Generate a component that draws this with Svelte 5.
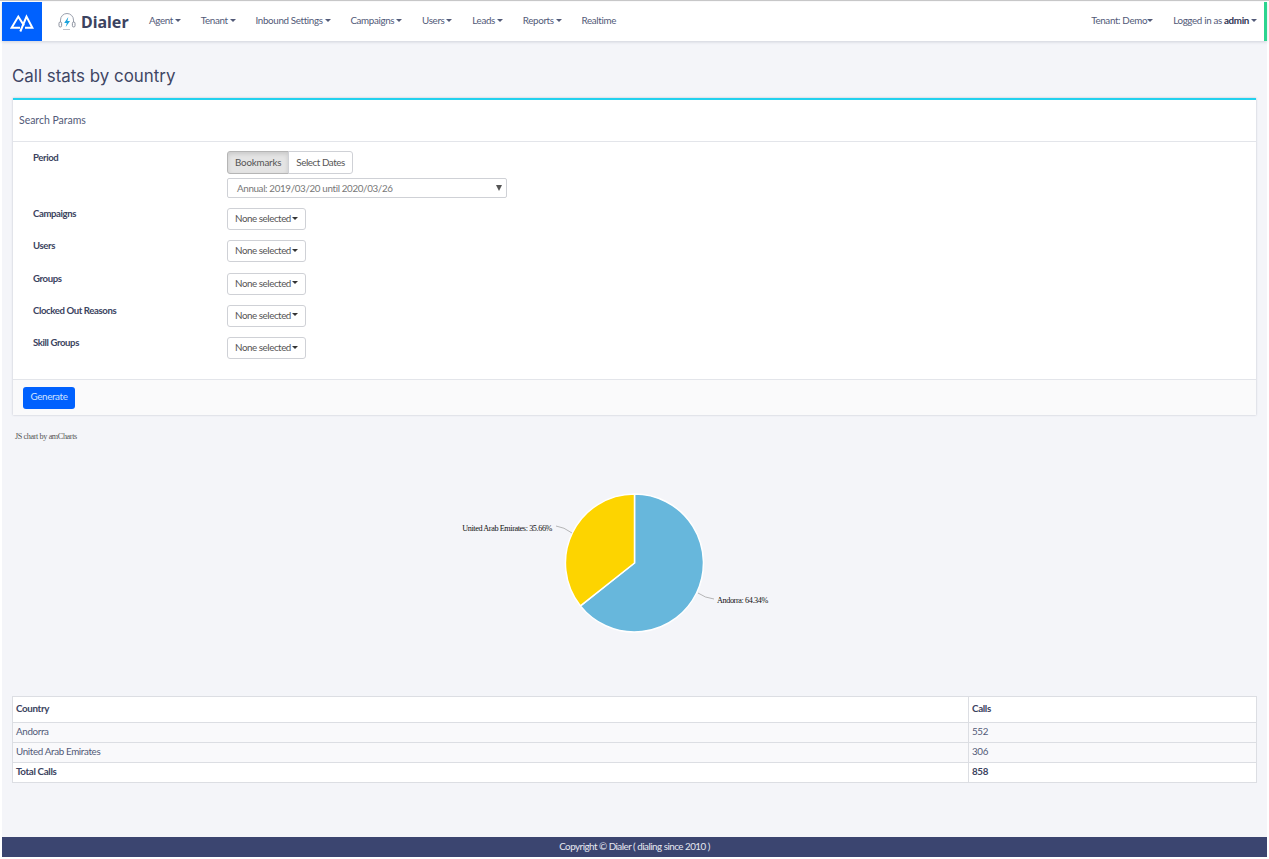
<script>
  const navItems = ['Agent', 'Tenant', 'Inbound Settings', 'Campaigns', 'Users', 'Leads', 'Reports'];
  const filters = ['Campaigns', 'Users', 'Groups', 'Clocked Out Reasons', 'Skill Groups'];
  const rows = [
    { country: 'Andorra', calls: 552 },
    { country: 'United Arab Emirates', calls: 306 }
  ];
</script>

<div class="page">
  <header class="navbar">
    <a class="brand-mark" href="#top" aria-label="Home">
      <svg width="24" height="20" viewBox="0 0 24 20" fill="none" stroke="#fff" stroke-width="2">
        <path d="M10 15.8 H1.6 L8.3 4.6 L14 13.5" />
        <path d="M10.3 19.5 L16.5 4.6 L22.4 15.8 H15" />
      </svg>
    </a>
    <div class="brand">
      <svg class="headset" width="18" height="19" viewBox="0 0 18 19" fill="none">
        <path d="M2.5 10 V8 a6.5 6.5 0 0 1 13 0 V10" stroke="#9aa0ad" stroke-width="1" />
        <rect x="1" y="10" width="2.6" height="5" rx="1.3" stroke="#7f8694" stroke-width="0.9" />
        <rect x="14.4" y="10" width="2.6" height="5" rx="1.3" stroke="#7f8694" stroke-width="0.9" />
        <path d="M5 17.5 H12" stroke="#b5bac4" stroke-width="0.9" />
        <path d="M10.3 5 L6.2 11 H8.8 L7.7 15 L12 9 H9.4 Z" fill="#1ba3dc" />
      </svg>
      <span class="brand-name">Dialer</span>
    </div>
    <nav class="nav-left">
      {#each navItems as item}
        <span class="nav-item">{item}<i class="caret"></i></span>
      {/each}
      <span class="nav-item">Realtime</span>
    </nav>
    <div class="nav-right">
      <span class="nav-item">Tenant: Demo<i class="caret tight"></i></span>
      <span class="nav-item">Logged in as <b>admin</b><i class="caret"></i></span>
    </div>
  </header>

  <main class="content">
    <h1>Call stats by country</h1>

    <section class="card">
      <div class="card-head">Search Params</div>
      <div class="card-body">
        <div class="row period">
          <span class="label">Period</span>
          <div class="controls">
            <div class="btn-group">
              <span class="btn active">Bookmarks</span>
              <span class="btn">Select Dates</span>
            </div>
            <div class="select">Annual: 2019/03/20 until 2020/03/26<i class="select-arrow"></i></div>
          </div>
        </div>
        {#each filters as f}
          <div class="row">
            <span class="label">{f}</span>
            <span class="btn single">None selected<i class="caret dark"></i></span>
          </div>
        {/each}
      </div>
      <div class="card-foot"><span class="generate">Generate</span></div>
    </section>

    <div class="chart">
      <span class="credit">JS chart by amCharts</span>
      <svg class="pie" width="1245" height="265" viewBox="0 0 1245 265">
        <g transform="translate(-12 -430)">
          <path d="M634.5 563 L634.5 494 A69 69 0 1 1 580.4 605.9 Z" fill="#67b7dc" stroke="#fff" stroke-width="1.5" />
          <path d="M634.5 563 L580.4 605.9 A69 69 0 0 1 634.5 494 Z" fill="#fdd400" stroke="#fff" stroke-width="1.5" />
          <path d="M556 526 Q564 527 572 533" fill="none" stroke="#999" stroke-width="0.7" />
          <path d="M698 593 Q705 598 714 599" fill="none" stroke="#999" stroke-width="0.7" />
          <text x="552" y="531" text-anchor="end">United Arab Emirates: 35.66%</text>
          <text x="717" y="603">Andorra: 64.34%</text>
        </g>
      </svg>
    </div>

    <table>
      <thead>
        <tr><th class="c1">Country</th><th>Calls</th></tr>
      </thead>
      <tbody>
        {#each rows as r}
          <tr class="striped"><td>{r.country}</td><td>{r.calls}</td></tr>
        {/each}
        <tr class="total"><td>Total Calls</td><td>858</td></tr>
      </tbody>
    </table>
  </main>

  <footer>Copyright © Dialer ( dialing since 2010 )</footer>
</div>

<style>
  :global(body) {
    margin: 0;
    background: #fff;
  }
  .page {
    box-sizing: border-box;
    width: 1269px;
    height: 859px;
    padding: 1px 2px 2px;
    border-top: 1px solid #c9c9c9;
    display: flex;
    flex-direction: column;
    background: #f4f5f9;
    background-clip: content-box;
    font-family: Lato, "Liberation Sans", sans-serif;
    font-size: 9.8px;
    letter-spacing: -0.35px;
    color: #525a78;
  }
  .navbar {
    height: 39px;
    flex: none;
    display: flex;
    align-items: center;
    background: #fff;
    border-right: 3px solid #2bd48f;
    box-shadow: 0 1px 3px rgba(60, 70, 100, 0.2);
  }
  .brand-mark {
    width: 40px;
    height: 39px;
    flex: none;
    background: #0061fe;
    display: flex;
    align-items: center;
    justify-content: center;
  }
  .brand {
    display: flex;
    align-items: center;
    margin-left: 16px;
    gap: 5px;
    width: 91px;
  }
  .brand-name {
    font-family: "Noto Sans", sans-serif;
    font-weight: 700;
    font-size: 16px;
    letter-spacing: 0;
    color: #3b4360;
  }
  .nav-left {
    display: flex;
    gap: 19.8px;
    flex: 1;
    margin-top: -3px;
  }
  .nav-right {
    display: flex;
    gap: 20px;
    margin-right: 7px;
    margin-top: -3px;
  }
  .nav-item {
    display: inline-flex;
    align-items: center;
    white-space: pre;
  }
  .nav-item b {
    color: #2f3654;
  }
  .caret {
    display: inline-block;
    margin-left: 2px;
    border-top: 3px solid #525a78;
    border-left: 3px solid transparent;
    border-right: 3px solid transparent;
  }
  .caret.tight {
    margin-left: 0;
  }
  .caret.dark {
    margin-left: 1px;
    border-top-color: #333;
  }
  .content {
    flex: 1;
    padding: 0 10px;
    display: flex;
    flex-direction: column;
  }
  h1 {
    margin: 25px 0 12px;
    font-family: Inter, sans-serif;
    font-weight: 400;
    font-size: 16.9px;
    letter-spacing: 0;
    line-height: 20px;
    color: #3f4664;
  }
  .card {
    background: #fff;
    border-top: 2px solid #22d1ee;
    height: 315px;
    margin: 0 1px;
    display: flex;
    flex-direction: column;
    box-shadow: 0 0 2px rgba(60, 70, 100, 0.3);
  }
  .card-head {
    height: 42px;
    flex: none;
    box-sizing: border-box;
    display: flex;
    align-items: center;
    padding: 0 0 1px 6px;
    border-bottom: 1px solid #e3e5ea;
    font-size: 10.5px;
    letter-spacing: -0.02px;
  }
  .card-body {
    flex: 1;
    padding: 10px 0 0 20px;
  }
  .row {
    display: grid;
    grid-template-columns: 194px auto;
    justify-content: start;
    justify-items: start;
    height: 32.3px;
  }
  .row.period {
    height: 56px;
  }
  .label {
    font-weight: 700;
    color: #3b4360;
    font-size: 9.6px;
    letter-spacing: -0.4px;
    line-height: 12px;
  }
  .controls {
    display: flex;
    flex-direction: column;
    gap: 4px;
    margin-top: -1px;
  }
  .btn-group {
    display: flex;
  }
  .btn {
    box-sizing: border-box;
    height: 23px;
    display: inline-flex;
    align-items: center;
    padding: 0 7px 1px;
    border: 1px solid #cfd1d6;
    background: #fff;
    color: #555;
    border-radius: 0 3px 3px 0;
    margin-left: -1px;
    letter-spacing: -0.42px;
  }
  .btn.active {
    background: #e4e4e4;
    border-color: #b5b5b5;
    border-radius: 3px 0 0 3px;
    margin-left: 0;
    letter-spacing: -0.2px;
    box-shadow: inset 0 2px 4px rgba(0, 0, 0, 0.12);
  }
  .btn.single {
    border-radius: 3px;
    margin-left: 0;
    height: 22px;
    padding-bottom: 2px;
    letter-spacing: -0.45px;
  }
  .select {
    box-sizing: border-box;
    width: 280px;
    height: 20px;
    display: flex;
    align-items: center;
    justify-content: space-between;
    padding: 0 4px 0 9px;
    border: 1px solid #cfd1d6;
    border-radius: 2px;
    color: #777;
  }
  .select-arrow {
    border-top: 6px solid #555;
    border-left: 3px solid transparent;
    border-right: 3px solid transparent;
  }
  .card-foot {
    height: 36px;
    flex: none;
    box-sizing: border-box;
    background: #fafafb;
    border-top: 1px solid #e3e5ea;
    padding: 7px 0 0 10px;
  }
  .generate {
    display: inline-flex;
    align-items: center;
    justify-content: center;
    width: 52px;
    height: 22px;
    padding-bottom: 4px;
    box-sizing: border-box;
    background: #0061fe;
    color: #cfe2ff;
    border-radius: 3px;
  }
  .chart {
    position: relative;
    height: 281px;
    flex: none;
  }
  .credit {
    position: absolute;
    left: 3px;
    top: 17px;
    font-family: "Liberation Serif", serif;
    font-size: 8.2px;
    letter-spacing: -0.4px;
    color: #555;
  }
  .pie {
    position: absolute;
    left: 0;
    top: 15px;
    font-family: "Liberation Serif", serif;
    font-size: 8.2px;
    letter-spacing: -0.4px;
  }
  .pie text {
    fill: #111;
  }
  table {
    width: 100%;
    border-collapse: collapse;
    background: #fff;
    table-layout: fixed;
  }
  th, td {
    border: 1px solid #dcdee3;
    text-align: left;
    padding: 0 3px 3px;
    height: 16px;
    line-height: 12px;
  }
  th {
    height: 22px;
    color: #3b4360;
    font-weight: 700;
  }
  .c1 {
    width: 949px;
  }
  .striped td {
    background: #f9f9fb;
  }
  .total td {
    font-weight: 700;
    color: #3b4360;
  }
  footer {
    height: 20px;
    flex: none;
    background: #3b4570;
    color: #e6e8f0;
    display: flex;
    align-items: center;
    justify-content: center;
    letter-spacing: -0.5px;
    padding-bottom: 3px;
    box-sizing: border-box;
  }
</style>
